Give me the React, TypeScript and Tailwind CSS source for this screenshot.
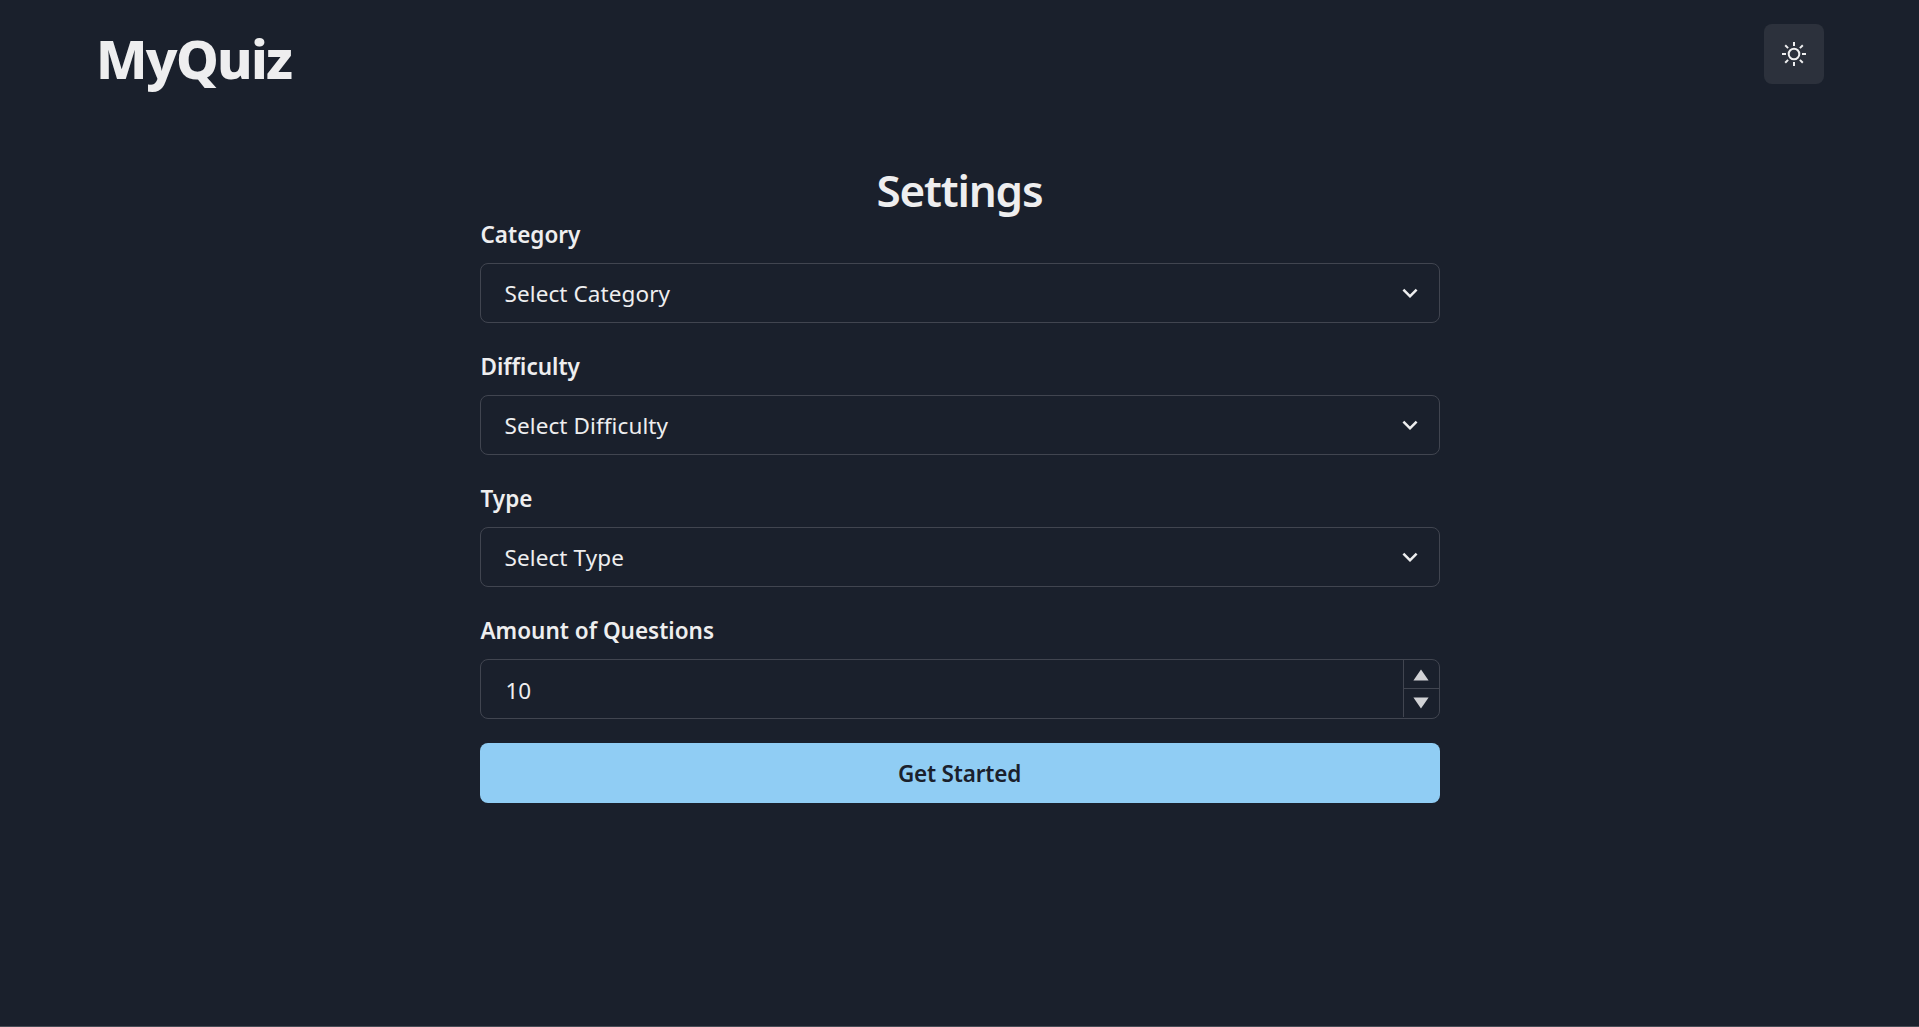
import React from 'react';

function SunIcon() {
  return (
    <svg viewBox="0 0 24 24" className="size-6 text-[#eeeeef]" fill="none" stroke="currentColor" strokeWidth="2">
      <circle cx="12" cy="12" r="5.3" />
      <path d="M12 0v4M12 20v4M3.2 3.2l2.9 2.9M17.9 17.9l2.9 2.9M0 12h4M20 12h4M3.2 20.8l2.9-2.9M17.9 6.1l2.9-2.9" />
    </svg>
  );
}

function ChevronDown() {
  return (
    <svg viewBox="0 0 24 24" className="size-[30px]" fill="currentColor">
      <path d="M16.59 8.59L12 13.17 7.41 8.59 6 10l6 6 6-6z" />
    </svg>
  );
}

function Label({ children }: { children: string }) {
  return <div className="mb-2.5 h-9 pl-px text-[22.5px] leading-9 font-semibold">{children}</div>;
}

function SelectField({ label, placeholder }: { label: string; placeholder: string }) {
  return (
    <div className="mb-[26px]">
      <Label>{label}</Label>
      <button className="flex h-[60px] w-full items-center justify-between rounded-[8px] border border-[#414550] pr-[14px] pl-6 text-left text-[22.5px]">
        <span className="pt-px tracking-[0.1px]">{placeholder}</span>
        <ChevronDown />
      </button>
    </div>
  );
}

export default function App() {
  return (
    <div className="flex h-[1027px] flex-col border-b border-[#484c56] bg-[#1a202c] font-['Noto_Sans',sans-serif] text-[#eeeeef]">
      <header className="flex items-start justify-between px-[95px] pt-6">
        <h1 className="h-[70px] pl-px text-[54px] leading-[68px] font-extrabold tracking-[-1.7px]">MyQuiz</h1>
        <button className="flex size-[60px] items-center justify-center rounded-[8px] bg-[#2c313c]">
          <SunIcon />
        </button>
      </header>
      <main className="mx-auto mt-[70px] w-[960px]">
        <h2 className="h-[53px] text-center text-[44px] leading-[52px] font-semibold tracking-[-1.2px]">Settings</h2>
        <SelectField label="Category" placeholder="Select Category" />
        <SelectField label="Difficulty" placeholder="Select Difficulty" />
        <SelectField label="Type" placeholder="Select Type" />
        <Label>Amount of Questions</Label>
        <div className="flex h-[60px] items-stretch rounded-[8px] border border-[#414550]">
          <span className="flex-1 pl-[25px] text-[22.5px] leading-[62px]">10</span>
          <div className="mb-px flex w-9 flex-col border-l border-[#414550] text-[#d1d2d5]">
            <button className="flex h-[29px] items-center justify-center border-b border-[#414550] pt-px">
              <svg viewBox="0 0 16 12" className="h-3 w-4" fill="currentColor"><path d="M8 .6L15.6 11.5H.4z" /></svg>
            </button>
            <button className="flex flex-1 items-center justify-center">
              <svg viewBox="0 0 16 12" className="h-3 w-4" fill="currentColor"><path d="M8 11.4L15.6.5H.4z" /></svg>
            </button>
          </div>
        </div>
        <button className="mt-6 h-[60px] w-full rounded-[8px] bg-[#90cdf4] pt-px text-[22.5px] font-semibold tracking-[-0.2px] text-[#1a202c]">Get Started</button>
      </main>
    </div>
  );
}
